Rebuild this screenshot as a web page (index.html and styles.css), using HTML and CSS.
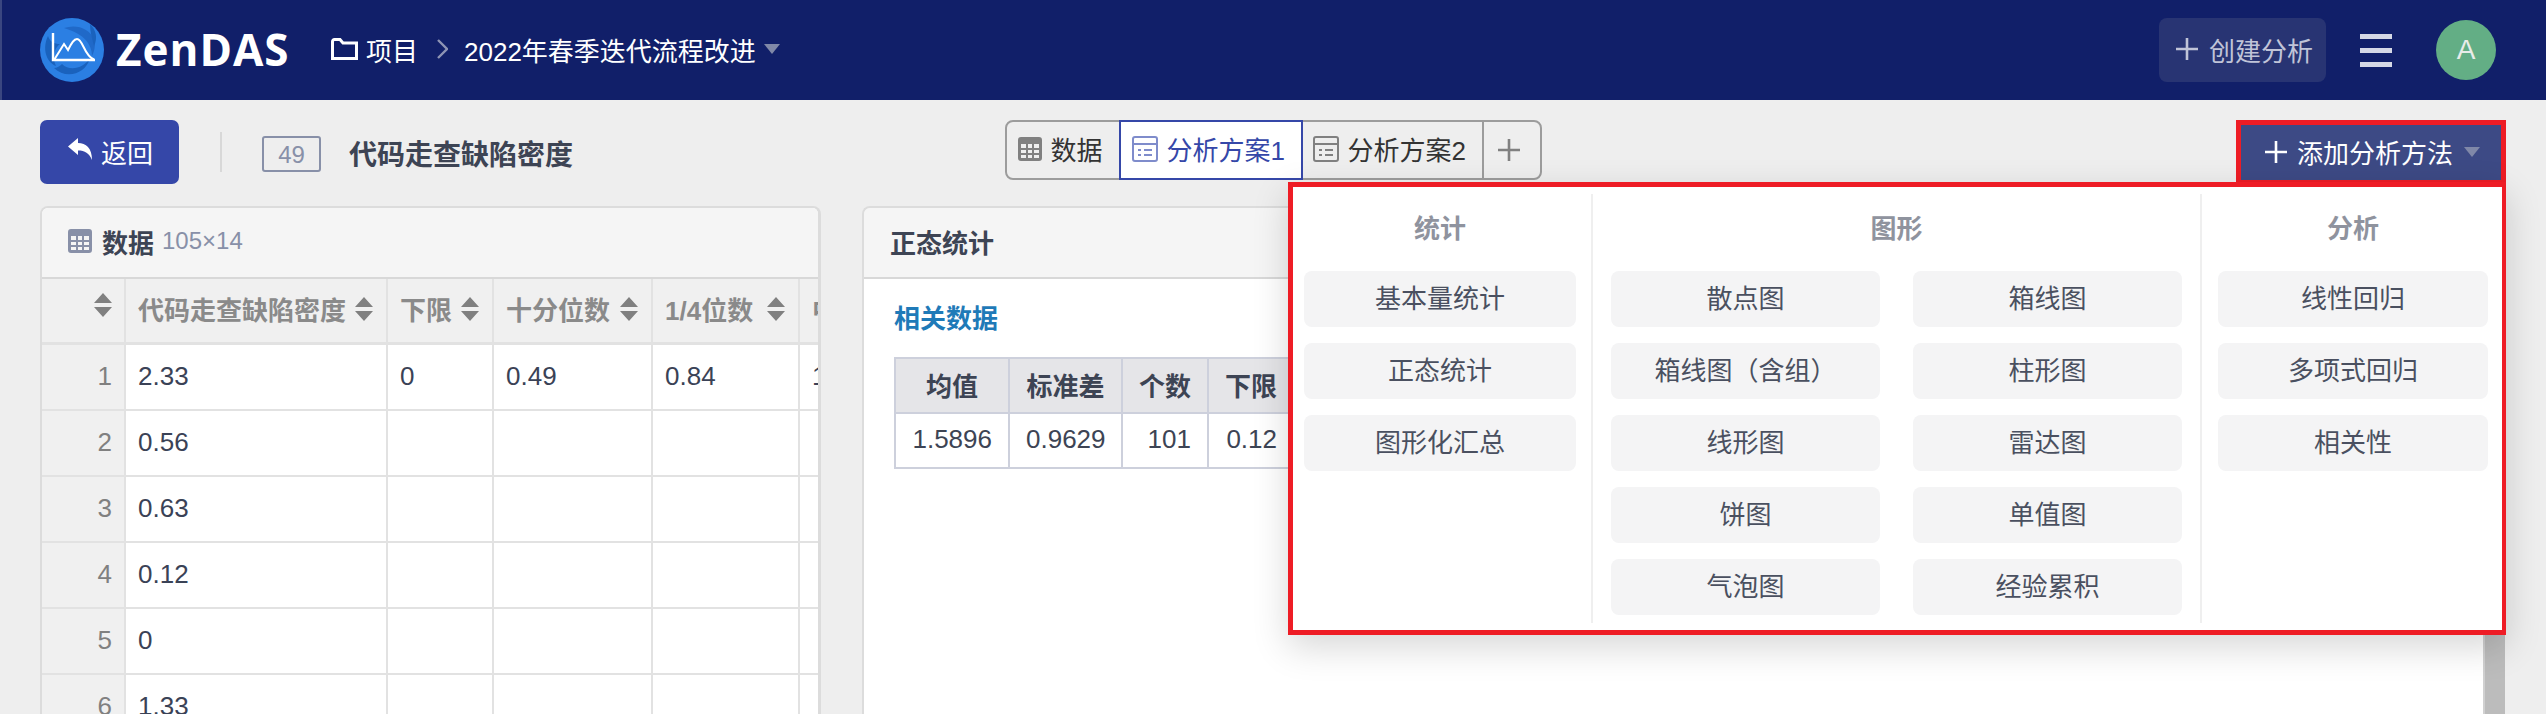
FILE: index.html
```html
<!DOCTYPE html>
<html lang="zh-CN">
<head>
    <meta charset="UTF-8">
    <title>ZenDAS</title>
    <link rel="stylesheet" href="styles.css">
</head>
<body>
    <svg class="defs" width="0" height="0">
        <symbol id="i-plus" viewBox="0 0 22 22"><path d="M11 0V22M0 11H22" stroke="currentColor" stroke-width="2.6" fill="none"/></symbol>
        <symbol id="i-sort" viewBox="0 0 18 24"><path d="M9 0L18 10H0ZM0 14H18L9 24Z" fill="currentColor"/></symbol>
        <symbol id="i-table" viewBox="0 0 24 24"><path fill-rule="evenodd" fill="currentColor" d="M3 0H21A3 3 0 0 1 24 3V21A3 3 0 0 1 21 24H3A3 3 0 0 1 0 21V3A3 3 0 0 1 3 0ZM3 7V11H8V7ZM10 7V11H14V7ZM16 7V11H21V7ZM3 13V16H8V13ZM10 13V16H14V13ZM16 13V16H21V13ZM3 18V21H8V18ZM10 18V21H14V18ZM16 18V21H21V18Z"/></symbol>
        <symbol id="i-list" viewBox="0 0 26 26"><g fill="none" stroke="currentColor" stroke-width="2"><rect x="1" y="1" width="24" height="24" rx="2"/><path d="M1 8H25"/><path d="M6 14H9M12 14H20M6 19H9M12 19H20"/></g></symbol>
    </svg>

    <header class="topbar">
        <svg class="logo" viewBox="0 0 64 64">
            <circle cx="32" cy="32" r="32" fill="#2b7fe3"/>
            <path d="M8 18C2 30 6 44 16 48C12 40 14 30 20 26C14 26 10 24 8 18Z" fill="#1a62bd"/>
            <path d="M14 50C26 62 46 56 50 40C44 50 30 54 22 46C20 48 17 50 14 50Z" fill="#1a62bd"/>
            <path d="M24 10C36 6 50 10 54 22C56 28 54 34 52 38C52 26 44 16 24 10Z" fill="#2069c8"/>
            <path d="M50 6C56 12 58 20 54 28C52 20 50 14 50 6Z" fill="#1a62bd"/>
            <path d="M13 15V42H55" fill="none" stroke="#fff" stroke-width="2.4"/>
            <path d="M14 42L24 26L28 32C32 24 34 21 37 21C43 21 44 38 54 41.5" fill="none" stroke="#fff" stroke-width="2"/>
        </svg>
        <span class="brand">ZenDAS</span>
        <nav class="crumbs">
            <svg class="folder" viewBox="0 0 27 22"><path d="M1.5 3.5A2 2 0 0 1 3.500 1.500H9L12 5H25.500V20.500H1.500Z" fill="none" stroke="#fff" stroke-width="3"/></svg>
            <span>项目</span>
            <svg class="chevron" viewBox="0 0 11 20"><path d="M1 1L10 10L1 19" fill="none" stroke="#8e94b4" stroke-width="2.400"/></svg>
            <span>2022年春季迭代流程改进</span>
            <i class="caret"></i>
        </nav>
        <div class="topbar-right">
            <button class="create-btn"><svg class="icon-plus"><use href="#i-plus"/></svg>创建分析</button>
            <div class="burger"><i></i><i></i><i></i></div>
            <div class="avatar">A</div>
        </div>
    </header>

    <section class="subbar">
        <div class="subbar-left">
            <button class="back-btn">
                <svg class="reply" viewBox="0 0 24 22"><path d="M0 8.500L10 0V5C18 5 24 10 24 22C21 15 17 12.500 10 12.500V17Z" fill="#fff"/></svg>
                返回
            </button>
            <span class="vline"></span>
            <span class="badge">49</span>
            <h1 class="page-title">代码走查缺陷密度</h1>
        </div>

        <div class="tabs">
            <div class="tab tab-data"><svg class="icon-table"><use href="#i-table"/></svg>数据</div>
            <div class="tab tab-active"><svg class="icon-list"><use href="#i-list"/></svg>分析方案1</div>
            <div class="tab tab-second"><svg class="icon-list"><use href="#i-list"/></svg>分析方案2</div>
            <div class="tab tab-add"><svg class="icon-plus"><use href="#i-plus"/></svg></div>
        </div>

        <div class="add-wrap">
            <button class="add-btn"><svg class="icon-plus"><use href="#i-plus"/></svg>添加分析方法<i class="caret"></i></button>
            <div class="dropdown">
                <div class="menu-col menu-col-a">
                    <div class="menu-title">统计</div>
                    <div class="menu-items">
                        <a class="menu-item">基本量统计</a>
                        <a class="menu-item">正态统计</a>
                        <a class="menu-item">图形化汇总</a>
                    </div>
                </div>
                <div class="menu-col menu-col-b">
                    <div class="menu-title">图形</div>
                    <div class="menu-items menu-items-two">
                        <a class="menu-item">散点图</a>
                        <a class="menu-item">箱线图</a>
                        <a class="menu-item">箱线图（含组）</a>
                        <a class="menu-item">柱形图</a>
                        <a class="menu-item">线形图</a>
                        <a class="menu-item">雷达图</a>
                        <a class="menu-item">饼图</a>
                        <a class="menu-item">单值图</a>
                        <a class="menu-item">气泡图</a>
                        <a class="menu-item">经验累积</a>
                    </div>
                </div>
                <div class="menu-col menu-col-c">
                    <div class="menu-title">分析</div>
                    <div class="menu-items">
                        <a class="menu-item">线性回归</a>
                        <a class="menu-item">多项式回归</a>
                        <a class="menu-item">相关性</a>
                    </div>
                </div>
            </div>
        </div>
    </section>

    <main class="panels">
        <section class="card card-data">
            <div class="card-head">
                <svg class="icon-table head-icon"><use href="#i-table"/></svg>
                <strong>数据</strong>
                <span class="dim">105×14</span>
            </div>
            <div class="data-clip">
                <table class="data-table">
                    <colgroup>
                        <col class="c0"><col class="c1"><col class="c2"><col class="c3"><col class="c4"><col class="c5">
                    </colgroup>
                    <thead>
                        <tr>
                            <th class="idx"><svg class="icon-sort"><use href="#i-sort"/></svg></th>
                            <th><div class="th-in">代码走查缺陷密度<svg class="icon-sort"><use href="#i-sort"/></svg></div></th>
                            <th><div class="th-in">下限<svg class="icon-sort"><use href="#i-sort"/></svg></div></th>
                            <th><div class="th-in">十分位数<svg class="icon-sort"><use href="#i-sort"/></svg></div></th>
                            <th><div class="th-in">1/4位数<svg class="icon-sort"><use href="#i-sort"/></svg></div></th>
                            <th><div class="th-in">中位数<svg class="icon-sort"><use href="#i-sort"/></svg></div></th>
                        </tr>
                    </thead>
                    <tbody>
                        <tr><td class="idx">1</td><td>2.33</td><td>0</td><td>0.49</td><td>0.84</td><td>1.33</td></tr>
                        <tr><td class="idx">2</td><td>0.56</td><td></td><td></td><td></td><td></td></tr>
                        <tr><td class="idx">3</td><td>0.63</td><td></td><td></td><td></td><td></td></tr>
                        <tr><td class="idx">4</td><td>0.12</td><td></td><td></td><td></td><td></td></tr>
                        <tr><td class="idx">5</td><td>0</td><td></td><td></td><td></td><td></td></tr>
                        <tr><td class="idx">6</td><td>1.33</td><td></td><td></td><td></td><td></td></tr>
                    </tbody>
                </table>
            </div>
        </section>

        <section class="card card-stat">
            <div class="card-head"><strong>正态统计</strong></div>
            <div class="stat-body">
                <div class="stat-content">
                    <h3 class="stat-heading">相关数据</h3>
                    <table class="stat-table">
                        <thead>
                            <tr><th>均值</th><th>标准差</th><th>个数</th><th>下限</th></tr>
                        </thead>
                        <tbody>
                            <tr><td>1.5896</td><td>0.9629</td><td>101</td><td>0.12</td></tr>
                        </tbody>
                    </table>
                </div>
                <div class="scroll-track"></div>
            </div>
        </section>
    </main>
</body>
</html>
```
FILE: styles.css
```css
* {
    box-sizing: border-box;
}
html, body {
    margin: 0;
    height: 714px;
    overflow: hidden;
}
body {
    font-family: "Liberation Sans", "Noto Sans CJK SC", sans-serif;
    font-size: 26px;
    color: #3d4454;
    background-color: #eeeeee;
}
button {
    font: inherit;
    border: none;
}
.defs {
    position: absolute;
}

/* top bar */
.topbar {
    height: 100px;
    display: flex;
    align-items: center;
    padding: 0 50px 0 38px;
    border-left: 2px solid #3a4680;
    background-color: #111f69;
    color: #fff;
}
.logo {
    width: 64px;
    height: 64px;
    flex: none;
}
.brand {
    width: 173px;
    margin-left: 12px;
    padding-bottom: 2px;
    font-family: "Open Sans", sans-serif;
    font-size: 44px;
    font-weight: 700;
    letter-spacing: 1px;
    white-space: nowrap;
}
.crumbs {
    display: flex;
    align-items: center;
    margin-left: 42px;
    padding-bottom: 2px;
}
.folder {
    width: 27px;
    height: 22px;
    margin-right: 8px;
}
.chevron {
    width: 11px;
    height: 20px;
    margin: 0 16px 0 19px;
}
.caret {
    display: inline-block;
    width: 0;
    height: 0;
    margin-left: 8px;
    border-left: 8px solid transparent;
    border-right: 8px solid transparent;
    border-top: 10px solid #8088a8;
}
.topbar-right {
    display: flex;
    align-items: center;
    margin-left: auto;
}
.create-btn {
    display: flex;
    align-items: center;
    width: 167px;
    height: 64px;
    padding: 0 0 2px 17px;
    border-radius: 8px;
    background-color: #283473;
    color: #c0c4d8;
}
.icon-plus {
    width: 22px;
    height: 22px;
    flex: none;
}
.create-btn .icon-plus {
    margin-right: 11px;
}
.burger {
    width: 32px;
    margin-left: 34px;
    display: flex;
    flex-direction: column;
    gap: 9px;
}
.burger i {
    height: 5px;
    background-color: #d5d8e6;
}
.avatar {
    width: 60px;
    height: 60px;
    margin-left: 44px;
    border-radius: 50%;
    background-color: #63ae85;
    color: #e8ece9;
    font-size: 28px;
    line-height: 60px;
    text-align: center;
}

/* second row */
.subbar {
    display: grid;
    grid-template-columns: 1fr auto 1fr;
    align-items: start;
    padding: 20px 40px 0;
    height: 106px;
}
.subbar-left {
    display: flex;
    align-items: center;
}
.back-btn {
    display: flex;
    align-items: center;
    width: 139px;
    height: 64px;
    padding: 0 0 2px 28px;
    border-radius: 7px;
    background-color: #3547a8;
    color: #fff;
}
.reply {
    width: 24px;
    height: 22px;
    margin-right: 9px;
    margin-top: -4px;
}
.vline {
    width: 2px;
    height: 40px;
    margin-left: 41px;
    background-color: #d8d8d8;
}
.badge {
    width: 59px;
    height: 36px;
    margin-left: 40px;
    margin-top: 4px;
    border: 2px solid #8890a8;
    border-radius: 3px;
    color: #8890a8;
    font-size: 24px;
    line-height: 33px;
    text-align: center;
}
.page-title {
    margin: 2px 0 0 28px;
    font-size: 28px;
    font-weight: 700;
    color: #3d4454;
}

.tabs {
    display: flex;
    width: 537px;
    height: 60px;
    border: 2px solid #9c9c9c;
    border-radius: 8px;
    color: #333;
}
.tab {
    display: flex;
    align-items: center;
    padding: 0 0 3px 11px;
    white-space: nowrap;
}
.tab-data {
    width: 112px;
}
.icon-table {
    width: 24px;
    height: 24px;
    margin-right: 9px;
    color: #808080;
    flex: none;
}
.icon-list {
    width: 26px;
    height: 26px;
    margin-right: 9px;
    color: #808080;
    flex: none;
}
.tab-active {
    width: 184px;
    height: 60px;
    margin: -2px 0;
    padding-left: 11px;
    border: 2px solid #3547a8;
    background-color: #fff;
    color: #3547a8;
}
.tab-active .icon-list {
    color: #7f8ccb;
}
.tab-second {
    width: 179px;
    padding-left: 10px;
}
.tab-add {
    flex: 1;
    padding: 0 0 0 14px;
    border-left: 2px solid #9c9c9c;
    color: #808080;
}

/* add button and its menu */
.add-wrap {
    position: relative;
    justify-self: end;
}
.add-btn {
    display: flex;
    align-items: center;
    width: 270px;
    height: 62px;
    padding: 0 0 2px 24px;
    border: solid #ee1c25;
    border-width: 5px 5px 2px 5px;
    background-color: #3d4a85;
    color: #fff;
}
.add-btn .icon-plus {
    margin-right: 10px;
}
.add-btn .caret {
    margin-left: 11px;
}
.dropdown {
    position: absolute;
    top: 62px;
    right: 0;
    z-index: 5;
    width: 1218px;
    height: 453px;
    display: flex;
    padding: 7px 0;
    border: 5px solid #ee1c25;
    border-right-width: 4px;
    background-color: #fff;
    box-shadow: 0 12px 34px rgba(0, 0, 0, 0.16);
}
.menu-col {
    height: 100%;
}
.menu-col-a {
    width: 300px;
    padding: 0 15px 0 11px;
    border-right: 2px solid #efefef;
}
.menu-col-b {
    width: 609px;
    padding: 0 18px;
    border-right: 2px solid #efefef;
}
.menu-col-c {
    flex: 1;
    padding: 0 14px 0 16px;
}
.menu-title {
    height: 77px;
    padding-top: 17px;
    font-size: 26px;
    line-height: 36px;
    font-weight: 700;
    color: #8f939e;
    text-align: center;
}
.menu-items {
    display: flex;
    flex-direction: column;
    gap: 16px;
}
.menu-items-two {
    display: grid;
    grid-template-columns: 1fr 1fr;
    column-gap: 33px;
    row-gap: 16px;
}
.menu-item {
    height: 56px;
    border-radius: 8px;
    background-color: #f4f4f5;
    color: #4a5060;
    line-height: 56px;
    text-align: center;
}

/* two cards */
.panels {
    display: flex;
    padding-left: 40px;
    gap: 41px;
}
.card {
    height: 620px;
    border: solid #dcdcdc;
    border-width: 2px 2px 0 2px;
    border-radius: 8px 8px 0 0;
    background-color: #fff;
    overflow: hidden;
}
.card-data {
    width: 781px;
    border-right-width: 3px;
}
.card-stat {
    width: 1643px;
    border-right: none;
    background-color: transparent;
}
.card-head {
    height: 71px;
    display: flex;
    align-items: center;
    padding: 0 0 3px 26px;
    border-bottom: 2px solid #d8d8d8;
    background-color: #f5f5f5;
}
.card-head strong {
    font-size: 26px;
}
.head-icon {
    color: #8890a8;
    margin-right: 10px;
}
.dim {
    margin-left: 8px;
    font-size: 24px;
    color: #8890a8;
}
.data-clip {
    overflow: hidden;
}
.data-table {
    width: 918px;
    table-layout: fixed;
    border-collapse: separate;
    border-spacing: 0;
}
.c0 { width: 84px; }
.c1 { width: 262px; }
.c2 { width: 106px; }
.c3 { width: 159px; }
.c4 { width: 147px; }
.c5 { width: 160px; }
.data-table th,
.data-table td {
    height: 66px;
    padding: 0 12px 2px;
    border-right: 2px solid #e2e2e2;
    border-bottom: 2px solid #e2e2e2;
    white-space: nowrap;
    overflow: hidden;
}
.data-table th {
    height: 66px;
    padding-bottom: 4px;
    background-color: #f0f0f0;
    color: #8a8a8a;
    font-weight: 700;
    text-align: left;
    border-bottom-width: 3px;
}
.th-in {
    display: flex;
    align-items: center;
    justify-content: space-between;
    padding-right: 1px;
}
.icon-sort {
    width: 18px;
    height: 24px;
    color: #808080;
    flex: none;
}
.data-table .idx {
    background-color: #f0f0f0;
    color: #808080;
    text-align: right;
    font-weight: 400;
}
.data-table td {
    color: #3a4256;
}

.stat-body {
    height: 547px;
    display: flex;
}
.stat-content {
    width: 1620px;
    padding: 23px 0 0 30px;
    background-color: #fff;
}
.stat-heading {
    margin: 0 0 21px;
    font-size: 26px;
    line-height: 34px;
    color: #1f7ab8;
}
.scroll-track {
    width: 22px;
    border-left: 2px solid #d0d0d0;
    background-color: #bcbcbc;
}
.stat-table {
    table-layout: fixed;
    width: 401px;
    border-collapse: collapse;
    border: 2px solid #cdd0dc;
}
.stat-table th,
.stat-table td {
    height: 55px;
    padding: 0 16px 2px;
    border: 2px solid #cdd0dc;
    white-space: nowrap;
}
.stat-table th {
    background-color: #e5e5e8;
    font-weight: 700;
    text-align: center;
}
.stat-table td {
    text-align: right;
}
.stat-table th:nth-child(1) { width: 114px; }
.stat-table th:nth-child(2) { width: 113px; }
.stat-table th:nth-child(3) { width: 86px; }
```
